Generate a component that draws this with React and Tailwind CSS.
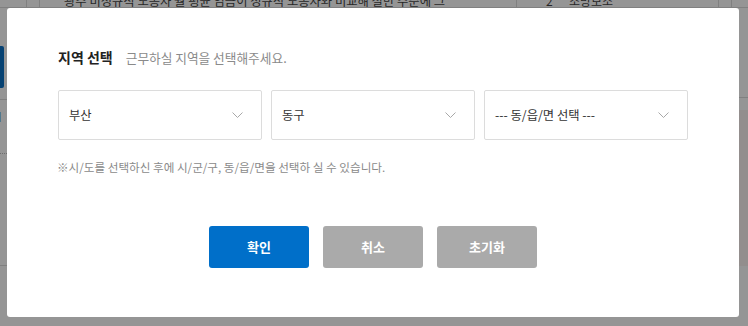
import React from "react";

const font = { fontFamily: '"Noto Sans CJK KR", "Noto Sans", sans-serif' };

function Chevron() {
  return (
    <svg width="11" height="6" viewBox="0 0 11 6" fill="none" className="shrink-0">
      <polyline points="0.5,0.5 5.5,5.5 10.5,0.5" stroke="#a8a8a8" strokeWidth="1" />
    </svg>
  );
}

function Select({ label }) {
  return (
    <div className="h-[50px] border border-[#dcdcdc] rounded-[2px] bg-white flex items-center justify-between pl-[10px] pr-[18px]">
      <span className="text-[12.3px] text-[#333]">{label}</span>
      <Chevron />
    </div>
  );
}

export default function App() {
  return (
    <div className="relative w-full h-[326px] overflow-hidden bg-white" style={font}>
      {/* underlying page */}
      <div className="flex flex-col h-full">
        <div className="h-[8px] overflow-hidden flex border-b border-[#dcdcdc] relative">
          <div className="w-[27px] border-r border-[#dcdcdc]" />
          <div className="w-[13px] border-r border-[#dcdcdc]" />
          <div className="w-[477px] border-r border-[#dcdcdc] pl-[24px] -mt-[7px] text-[12.3px] leading-[16px] text-[#444] whitespace-nowrap">
            광주 비정규직 노동자 월 평균 임금이 정규직 노동자와 비교해 절반 수준에 그
          </div>
          <div className="w-[202px] border-r border-[#dcdcdc] flex -mt-[7px] text-[12px] leading-[16px] text-[#444]">
            <span className="pl-[29px] w-[52px]">2</span>
            <span>조방보조</span>
          </div>
          <div className="w-[13px] border-r border-[#dcdcdc]" />
          <div className="flex-1" />
        </div>
        <div className="flex flex-1 justify-between">
          <div className="w-[7px] flex flex-col">
            <div className="h-[38px]" />
            <div className="h-[42px] w-[4px] bg-[#0a6fc4] rounded-r-[2px]" />
            <div className="h-[12px] border-b border-[#dcdcdc]" />
            <div className="h-[34px] text-[13px] leading-[34px] text-[#222] -ml-[8px]">H</div>
            <div className="h-[20px] border-b border-dotted border-[#bbb]" />
            <div className="h-[112px] border-b border-[#dcdcdc]" />
          </div>
          <div className="w-[9px] flex flex-col">
            <div className="h-[90px] border-b border-[#dcdcdc]" />
            <div className="h-[12px]" />
            <div className="h-[156px] bg-[#fbf4f1]" />
          </div>
        </div>
      </div>

      {/* overlay */}
      <div className="absolute inset-0 bg-black/[0.415] pl-[7px] pt-[8px]">
        <div className="w-[732px] h-[309px] bg-white rounded-[3px] px-[51px] pt-[39px] flex flex-col">
          <div className="flex items-baseline h-[20px] leading-[20px]">
            <span className="text-[14px] font-bold text-[#222]">지역 선택</span>
            <span className="ml-[13px] text-[12.7px] text-[#8a8a8a]">근무하실 지역을 선택해주세요.</span>
          </div>
          <div className="mt-[23px] grid grid-cols-3 gap-[9px]">
            <Select label="부산" />
            <Select label="동구" />
            <Select label="--- 동/읍/면 선택 ---" />
          </div>
          <div className="mt-[19px] text-[11.6px] leading-[16px] text-[#8a8a8a] -ml-[1px]">
            ※시/도를 선택하신 후에 시/군/구, 동/읍/면을 선택하 실 수 있습니다.
          </div>
          <div className="mt-[51px] flex justify-center gap-[14px]">
            <button className="w-[100px] h-[42px] rounded-[3px] bg-[#006fc9] text-white text-[13px] font-bold">확인</button>
            <button className="w-[100px] h-[42px] rounded-[3px] bg-[#aaaaaa] text-white text-[13px] font-bold">취소</button>
            <button className="w-[100px] h-[42px] rounded-[3px] bg-[#aaaaaa] text-white text-[13px] font-bold">초기화</button>
          </div>
        </div>
      </div>
    </div>
  );
}
